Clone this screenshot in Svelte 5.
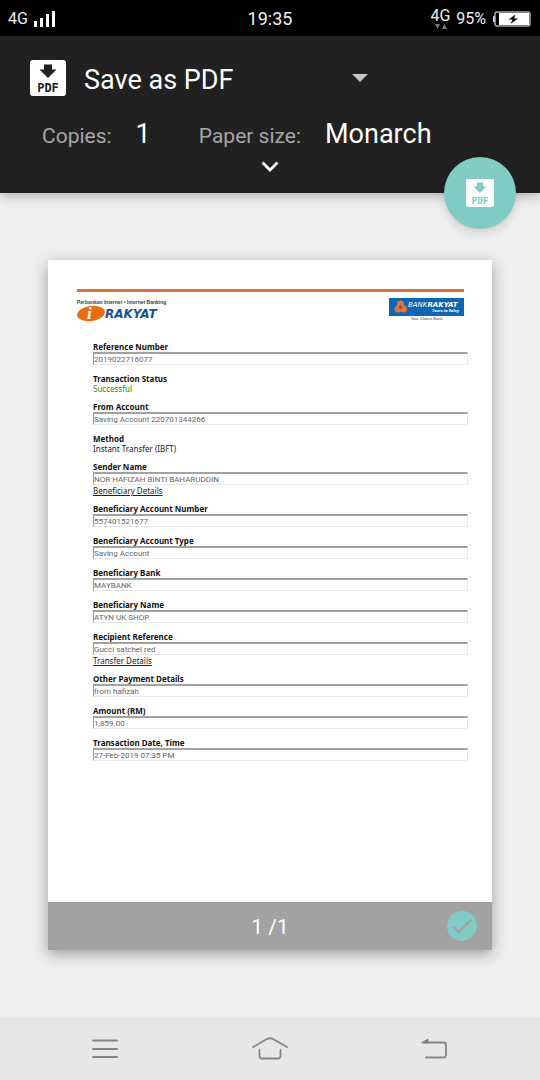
<script>
  const rows = [
    { id: 'ref', label: 'Reference Number', value: '2019022716077', field: true },
    { id: 'status', label: 'Transaction Status', value: 'Successful', ok: true },
    { id: 'from', label: 'From Account', value: 'Saving Account 220701344266', field: true },
    { id: 'method', label: 'Method', value: 'Instant Transfer (IBFT)' },
    { id: 'sender', label: 'Sender Name', value: 'NOR HAFIZAH BINTI BAHARUDDIN', field: true, section: 'Beneficiary Details' },
    { id: 'number', label: 'Beneficiary Account Number', value: '557401521677', field: true },
    { id: 'type', label: 'Beneficiary Account Type', value: 'Saving Account', field: true },
    { id: 'bank', label: 'Beneficiary Bank', value: 'MAYBANK', field: true },
    { id: 'name', label: 'Beneficiary Name', value: 'ATYN UK SHOP', field: true },
    { id: 'recipient', label: 'Recipient Reference', value: 'Gucci satchel red', field: true, section: 'Transfer Details' },
    { id: 'other', label: 'Other Payment Details', value: 'from hafizah', field: true },
    { id: 'amount', label: 'Amount (RM)', value: '1,859.00', field: true },
    { id: 'date', label: 'Transaction Date, Time', value: '27-Feb-2019 07:35 PM', field: true }
  ];
  let selected = $state(true);
</script>

{#snippet pdfIcon(size)}
  <svg class="pdf" width={size} height={size} viewBox="0 0 36 36" aria-hidden="true">
    <rect width="36" height="36" rx="3" fill="#fff" />
    <path class="ink" d="M14 4.500h8v5h4.500L18 18l-8.500-8.500H14z" />
    <text class="ink" x="18" y="32" text-anchor="middle">PDF</text>
  </svg>
{/snippet}

<div class="screen">
  <div class="status">
    <div class="left">
      <span>4G</span>
      <svg width="22" height="18" viewBox="0 0 22 18" fill="#fff" aria-hidden="true">
        <rect x="0" y="11" width="3" height="6" /><rect x="6" y="8" width="3" height="9" />
        <rect x="12" y="4" width="3" height="13" /><rect x="18" y="1" width="3" height="16" />
      </svg>
    </div>
    <span class="clock">19:35</span>
    <div class="right">
      <span class="net">4G
        <svg width="14" height="6" viewBox="0 0 14 6" fill="#777" aria-hidden="true"><path d="M1 0h5L3.500 5zM8 5h5L10.500 0z" /></svg>
      </span>
      <span>95%</span>
      <svg width="40" height="18" viewBox="0 0 40 18" aria-hidden="true">
        <path d="M3 6H1v6h2" fill="#ddd" />
        <rect x="3" y="2" width="35" height="14" rx="2" fill="none" stroke="#aaa" stroke-width="1.500" />
        <rect x="7" y="3" width="30" height="12" fill="#fff" />
        <path d="M23.500 4.500l-7 5h4l-2 4.500 7.500-5.500h-4z" fill="#000" />
      </svg>
    </div>
  </div>

  <header>
    <div class="dest">
      {@render pdfIcon(36)}
      <select aria-label="Printer"><option>Save as PDF</option></select>
      <svg class="caret" width="16" height="8" viewBox="0 0 16 8" aria-hidden="true"><path d="M0 0h16L8 8z" fill="#c4c4c4" /></svg>
    </div>
    <dl>
      <dt>Copies:</dt><dd class="copies">1</dd>
      <dt>Paper size:</dt><dd>Monarch</dd>
    </dl>
    <button class="expand" aria-label="More options">
      <svg width="18" height="12" viewBox="0 0 18 12" fill="none" stroke="#fff" stroke-width="2.800"><path d="M1.500 1.500L9 9l7.500-7.500" /></svg>
    </button>
    <button class="fab" aria-label="Save as PDF">{@render pdfIcon(28)}</button>
  </header>

  <main>
    <article class="sheet">
      <div class="paper">
        <div class="brands">
          <div class="irakyat">
            <span class="tag">Perbankan Internet • Internet Banking</span>
            <svg width="84" height="17" viewBox="0 0 84 17" role="img" aria-label="i Rakyat">
              <ellipse cx="14" cy="8.500" rx="14" ry="7.500" fill="#ea6a10" transform="rotate(-7 14 8.500)" />
              <text x="10" y="14" class="i">i</text>
              <text x="28" y="13" class="word">RAKYAT</text>
            </svg>
          </div>
          <div class="bank">
            <svg width="75" height="18" viewBox="0 0 75 18" role="img" aria-label="Bank Rakyat">
              <rect width="75" height="18" fill="#0c66b2" />
              <g fill="#e2733a">
                <circle cx="11.500" cy="6" r="3.500" /><circle cx="9" cy="11" r="3.500" /><circle cx="14.500" cy="11" r="3.500" />
              </g>
              <path d="M11.500 6.500l-2 4h4z" fill="#8c4630" />
              <text x="19" y="9" class="bk">BANK<tspan class="bkb">RAKYAT</tspan></text>
              <text x="43" y="14" class="sub">Yours to Relay</text>
            </svg>
            <span class="choice">Your Choice Bank</span>
          </div>
        </div>

        <div class="details">
          {#each rows as r (r.id)}
            <div class="row">
              {#if r.field}
                <label for={r.id}>{r.label}</label>
                <input id={r.id} value={r.value} readonly />
              {:else}
                <strong>{r.label}</strong>
                <span class="plain" class:ok={r.ok}>{r.value}</span>
              {/if}
              {#if r.section}<h2>{r.section}</h2>{/if}
            </div>
          {/each}
        </div>
      </div>
      <footer>
        <span>1 /1</span>
        <label class="pick">
          <input type="checkbox" bind:checked={selected} aria-label="Include page 1" />
          <svg width="30" height="30" viewBox="0 0 30 30" aria-hidden="true">
            <circle cx="15" cy="15" r="15" fill={selected ? '#80cbc4' : '#bbb'} />
            {#if selected}<path d="M6 15.500l6 5.500L24.500 8.500" fill="none" stroke="#a2a2a2" stroke-width="2.500" />{/if}
          </svg>
        </label>
      </footer>
    </article>
  </main>

  <nav>
    <button aria-label="Menu">
      <svg width="36" height="28" viewBox="0 0 36 28"><path d="M6 5.500h24M6 14h24M6 22h24" /></svg>
    </button>
    <button aria-label="Home">
      <svg width="36" height="28" viewBox="0 0 36 28"><path d="M1 12l14-8q3-1.500 6 0l14 8M7.500 15v6q0 2.500 2.500 2.500h16q2.500 0 2.500-2.500v-6" /></svg>
    </button>
    <button aria-label="Back">
      <svg width="36" height="28" viewBox="0 0 36 28"><path d="M6 7.500h20.500q2.500 0 2.500 2.500v10q0 2.500-2.500 2.500H9" /><path d="M5 7.500l6-3.500v3.500z" class="tip" /></svg>
    </button>
  </nav>
</div>

<style>
  :global(body) { margin: 0; background: #efefef; }
  * { box-sizing: border-box; }
  button { border: 0; padding: 0; background: none; cursor: pointer; }
  svg { display: block; flex: none; }
  .screen { min-height: 100vh; display: flex; flex-direction: column; background: #efefef; font-family: Roboto, sans-serif; }

  .status { height: 36px; padding: 2px 8px 0; display: grid; grid-template-columns: 1fr auto 1fr; align-items: center; background: #000; color: #eee; font-size: 16px; line-height: 20px; }
  .left, .right { display: flex; align-items: center; gap: 6px; }
  .right { justify-content: flex-end; }
  .clock { font-size: 18px; }
  .net { position: relative; padding-bottom: 6px; }
  .net svg { position: absolute; left: 4px; bottom: 2px; }

  header { position: relative; z-index: 1; height: 157px; padding: 20px 30px 0; background: #212121; color: #fff; box-shadow: 0 2px 12px rgba(0, 0, 0, .3); }
  .dest { display: flex; align-items: center; height: 44px; width: 338px; gap: 18px; }
  .dest select { flex: 1; appearance: none; border: 0; padding: 3px 0 0; background: none; color: #fff; font: 27px/36px Roboto, sans-serif; }
  .pdf .ink { fill: #212121; }
  .pdf text { font: bold 12px "DejaVu Sans Mono", monospace; }
  dl { display: flex; align-items: baseline; margin: 16px 0 0; padding-left: 12px; line-height: 36px; }
  dt { color: #a6a6a6; font-size: 21px; }
  dd { margin: 0 0 0 24px; font-size: 27px; }
  .copies { margin-right: 48px; }
  .expand { display: block; margin: 7px auto 0; }
  .fab { position: absolute; right: 24px; bottom: -36px; width: 72px; height: 72px; border-radius: 50%; background: #80cbc4; display: grid; place-items: center; box-shadow: 0 4px 10px rgba(0, 0, 0, .14); }
  .fab .pdf .ink, .fab :global(.ink) { fill: #80cbc4; }

  main { flex: 1; padding: 67px 48px; }
  .sheet { display: flex; flex-direction: column; min-height: 690px; background: #fff; box-shadow: 0 4px 14px rgba(0, 0, 0, .35); }
  .paper { flex: 1; padding: 29px 24px 32px 29px; }
  .brands { display: flex; justify-content: space-between; margin-right: 4px; padding-top: 6px; border-top: 3px solid #d47540; height: 52px; }
  .irakyat { width: 84px; padding-top: 1px; }
  .tag { display: block; font: bold 5px/6px "Liberation Sans", sans-serif; color: #444; white-space: nowrap; }
  .i { font: italic bold 17px "Liberation Serif", serif; fill: #fff; }
  .word { font: italic bold 12px "DejaVu Sans", sans-serif; fill: #12519c; }
  .bank { display: flex; flex-direction: column; align-items: center; }
  .bk { font: italic 7px "DejaVu Sans", sans-serif; fill: #fff; }
  .bkb { font-weight: 800; }
  .sub { font: italic bold 4px "Open Sans", sans-serif; fill: #fff; }
  .choice { font: 4px/6px "Liberation Sans", sans-serif; color: #444; }

  .details { display: flex; flex-direction: column; gap: 8px; padding-left: 16px; font: 8px/9px "Noto Sans", sans-serif; color: #222; }
  .row { display: flex; flex-direction: column; }
  .row label, .row strong { font-weight: 700; line-height: 11px; color: #111; }
  .row input { height: 13px; width: 100%; margin: 0; padding: 0; border: 1px solid #e8e8e8; border-top: 2px solid #a2a2a2; border-left-color: #999; border-radius: 0; background: #fff; color: #666; font: 8px/10px Roboto, sans-serif; outline: 0; }
  .row .ok { color: #15921c; }
  .row h2 { margin: 2px 0 0; font: inherit; line-height: 8px; text-decoration: underline; }

  footer { position: relative; height: 48px; padding-top: 2px; display: flex; align-items: center; justify-content: center; background: #a2a2a2; color: #fff; font-size: 21px; }
  .pick { position: absolute; right: 15px; top: 9px; }
  .pick input { position: absolute; inset: 0; width: 30px; height: 30px; margin: 0; opacity: 0; }

  nav { height: 63px; display: flex; justify-content: center; align-items: center; gap: 129px; background: #e7e7e7; }
  nav svg { fill: none; stroke: #858585; stroke-width: 1.800; stroke-linecap: round; stroke-linejoin: round; }
  nav .tip { fill: #858585; stroke-width: 1; }
</style>
